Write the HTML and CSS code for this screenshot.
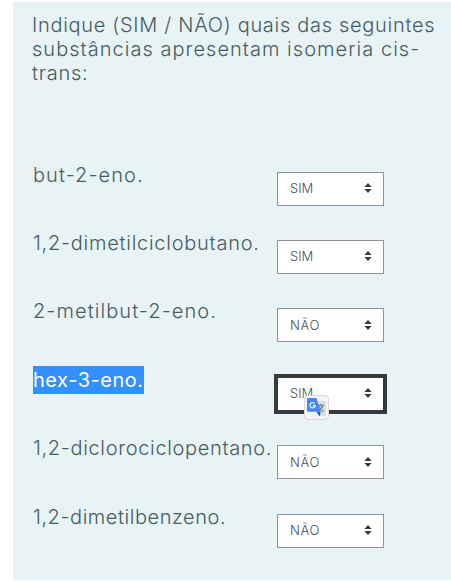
FILE: index.html
```
<!DOCTYPE html>
<html lang="pt">
<head>
<meta charset="utf-8">
<title>Isomeria cis-trans</title>
<link rel="stylesheet" href="styles.css">
</head>
<body>
<svg class="defs" aria-hidden="true"><symbol id="caret" viewBox="0 0 8 10"><path d="M4 0L7.6 4H.4zM4 10L.4 6h7.2z" fill="#343a40"/></symbol></svg>
<main class="question">
  <h1 class="prompt"><span class="l1">Indique (SIM / NÃO) quais das seguintes</span><br><span class="l2">substâncias apresentam isomeria cis-</span><br><span class="l3">trans:</span></h1>
  <div class="answers">
    <div class="row"><p class="name"><span class="n1">but-2-eno.</span></p><button class="select"><span class="value sim">SIM</span><svg class="caret"><use href="#caret"/></svg></button></div>
    <div class="row"><p class="name"><span class="n2">1,2-dimetilciclobutano.</span></p><button class="select"><span class="value sim">SIM</span><svg class="caret"><use href="#caret"/></svg></button></div>
    <div class="row"><p class="name"><span class="n3">2-metilbut-2-eno.</span></p><button class="select"><span class="value nao">NÃO</span><svg class="caret"><use href="#caret"/></svg></button></div>
    <div class="row"><p class="name"><span class="n4 selected">hex-3-eno.</span></p><button class="select focused"><span class="value sim">SIM</span><svg class="caret"><use href="#caret"/></svg>
      <span class="translate"><svg width="19" height="19" viewBox="0 0 18 18"><path d="M6 3h11a1 1 0 0 1 1 1v13H12z" fill="#dcdcdc"/><path d="M10 7h6M13 5.8V7m2 0c-.5 2.5-2 4-4 5m.5-4c1 2 2.300 3.500 4 5" fill="none" stroke="#708b91" stroke-width="1.300"/><path d="M1 0h8l4 13H1a1 1 0 0 1-1-1V1a1 1 0 0 1 1-1z" fill="#4688f4"/><path d="M9 13h4l-1 4.500z" fill="#2853ca"/><path d="M7.300 5.300A2.500 2.500 0 1 0 7.800 7.300H5.500" fill="none" stroke="#dbe8ff" stroke-width="1.300"/></svg></span></button></div>
    <div class="row"><p class="name"><span class="n5">1,2-diclorociclopentano.</span></p><button class="select"><span class="value nao">NÃO</span><svg class="caret"><use href="#caret"/></svg></button></div>
    <div class="row"><p class="name"><span class="n6">1,2-dimetilbenzeno.</span></p><button class="select"><span class="value nao">NÃO</span><svg class="caret"><use href="#caret"/></svg></button></div>
  </div>
</main>
</body>
</html>
```
FILE: styles.css
```
* { box-sizing: border-box; }
body { margin: 0; background: #fff; color: #495c62; font-family: Inter, "Open Sans", sans-serif; font-weight: 300; overflow: hidden; }
.defs { position: absolute; width: 0; height: 0; }
.question { margin: 2px 0 0 13px; height: 578px; padding: 11px 0 0 19px; background: #e7f3f5; }
.prompt { margin: 0; height: 158.6px; font-size: 20px; line-height: 24px; font-weight: 300; white-space: nowrap; }
.answers { display: grid; grid-auto-rows: 68.4px; }
.row { display: grid; grid-template-columns: 244px 107px; align-items: start; padding-left: 1px; }
.name { margin: -10.9px 0 0; font-size: 20px; line-height: 28px; white-space: nowrap; }
.name span { display: inline-block; }
.l1 { letter-spacing: .7px; }
.l2 { letter-spacing: 1.03px; }
.l3 { letter-spacing: .75px; }
.n1, .n3 { letter-spacing: 1.08px; }
.n2 { letter-spacing: .74px; }
.n4 { letter-spacing: .54px; }
.n5 { letter-spacing: .66px; }
.n6 { letter-spacing: .55px; }
.selected { background: #3390ff; color: #fff; font-weight: 400; }
.select { position: relative; display: flex; align-items: center; justify-content: space-between; width: 107px; height: 34px; padding: 0 11px 1px 12px; border: 1px solid #8f959e; background: #fff; color: #495057; font: 300 13px/18px Inter, sans-serif; }
.nao { letter-spacing: .6px; }
.focused { outline: 4px solid #373a3c; outline-offset: -1px; border-color: #373a3c; }
.caret { width: 8px; height: 10px; }
.translate { position: absolute; left: 26px; top: 17px; width: 25px; height: 25px; display: grid; place-items: center; background: #f5f5f5; border: 1px solid #d8d8d8; border-radius: 4px; }
```
